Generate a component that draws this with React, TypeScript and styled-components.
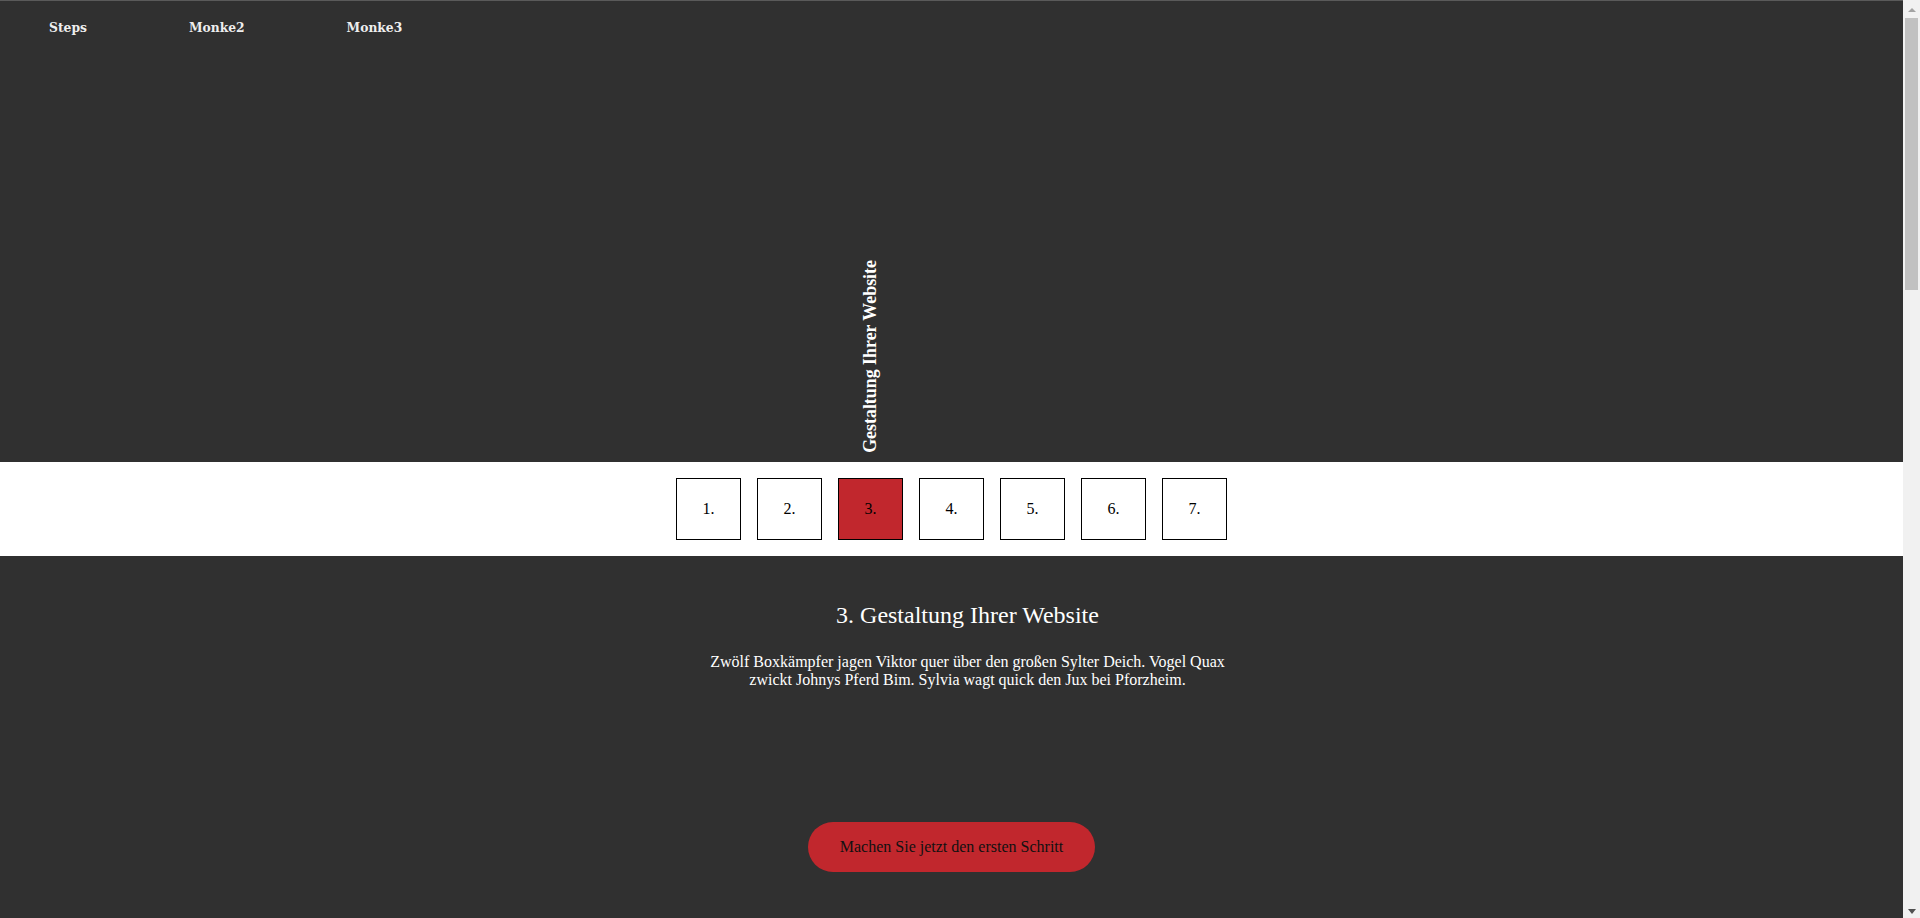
import React from "react";
import styled, { createGlobalStyle } from "styled-components";

const Global = createGlobalStyle`
  html, body { margin: 0; padding: 0; overflow: hidden; }
  body {
    background: #303030;
    font-family: "Liberation Serif", "Times New Roman", serif;
    color: #ffffff;
  }
`;

const Frame = styled.div`
  height: 100vh;
  display: flex;
`;

const Viewport = styled.div`
  flex: 1;
  min-width: 0;
  overflow-y: auto;
  overflow-x: hidden;
  scrollbar-width: none;
  box-sizing: border-box;
  border-top: 1px solid #5a5a5a;
  &::-webkit-scrollbar { display: none; }
`;

const Rail = styled.div`
  width: 17px;
  flex: none;
  background: #f1f1f1;
  display: flex;
  flex-direction: column;
`;

const RailButton = styled.div`
  height: 17px;
  flex: none;
  display: flex;
  justify-content: center;
  align-items: flex-start;
  padding-top: 8px;
  box-sizing: border-box;
`;

const Arrow = styled.span<{ $down?: boolean }>`
  width: 0;
  height: 0;
  border-left: 4px solid transparent;
  border-right: 4px solid transparent;
  ${(p) =>
    p.$down
      ? "border-top: 5px solid #505050;"
      : "border-bottom: 4px solid #a3a3a3;"}
`;

const Track = styled.div`
  flex: 1;
  padding: 1px 2px 0;
`;

const Thumb = styled.div`
  height: 272px;
  background: #c1c1c1;
`;

const Page = styled.div`
  min-height: 2982px;
  display: flex;
  flex-direction: column;
`;

const Top = styled.header`
  height: 461px;
  display: flex;
  flex-direction: column;
`;

const Nav = styled.nav`
  display: flex;
  gap: 102px;
  padding: 19px 0 0 49px;
`;

const NavLink = styled.a`
  font-family: "DejaVu Serif", "Liberation Serif", serif;
  font-weight: bold;
  font-size: 12.3px;
  color: #eeeeee;
  text-decoration: none;
  cursor: pointer;
`;

const Band = styled.section`
  background: #ffffff;
  padding: 16px 0;
  display: flex;
  justify-content: center;
`;

const Steps = styled.ol`
  list-style: none;
  margin: 0;
  padding: 0;
  display: flex;
  gap: 16px;
`;

const Step = styled.li<{ $active?: boolean }>`
  position: relative;
  box-sizing: border-box;
  width: 65px;
  height: 62px;
  border: 1px solid #000000;
  background: ${(p) => (p.$active ? "#c1272d" : "#ffffff")};
  color: #000000;
  font-size: 16px;
  display: flex;
  align-items: center;
  justify-content: center;
  cursor: pointer;
`;

const StepLabel = styled.span`
  position: absolute;
  left: 50%;
  bottom: calc(100% + 26px);
  transform: translateX(-50%) rotate(180deg);
  writing-mode: vertical-rl;
  white-space: nowrap;
  font-weight: bold;
  font-size: 17.9px;
  line-height: 1;
  color: #ffffff;
`;

const Content = styled.section`
  display: flex;
  flex-direction: column;
  align-items: center;
`;

const TextBlock = styled.div`
  display: flex;
  flex-direction: column;
  align-items: center;
  padding-left: 32px;
  text-align: center;
`;

const Title = styled.h2`
  margin: 46px 0 0;
  font-weight: normal;
  font-size: 24px;
  color: #ffffff;
`;

const Description = styled.p`
  margin: 24px 0 0;
  max-width: 530px;
  font-size: 16px;
  line-height: 18.4px;
  color: #ffffff;
`;

const CTA = styled.button`
  margin-top: 132px;
  height: 50px;
  padding: 0 32px;
  border: none;
  border-radius: 25px;
  background: #c1272d;
  color: #111111;
  font-family: "Liberation Serif", "Times New Roman", serif;
  font-size: 16px;
  cursor: pointer;
`;

const steps = [
  "Analyse",
  "Konzept",
  "Gestaltung Ihrer Website",
  "Entwicklung",
  "Inhalte",
  "Test",
  "Launch",
];

export default function App() {
  const active = 2;
  return (
    <>
      <Global />
      <Frame>
        <Viewport>
          <Page>
            <Top>
              <Nav>
                <NavLink>Steps</NavLink>
                <NavLink>Monke2</NavLink>
                <NavLink>Monke3</NavLink>
              </Nav>
            </Top>
            <Band>
              <Steps>
                {steps.map((s, i) => (
                  <Step key={i} $active={i === active}>
                    {i === active && <StepLabel>{s}</StepLabel>}
                    {i + 1}.
                  </Step>
                ))}
              </Steps>
            </Band>
            <Content>
              <TextBlock>
                <Title>3. Gestaltung Ihrer Website</Title>
                <Description>
                  Zwölf Boxkämpfer jagen Viktor quer über den großen Sylter
                  Deich. Vogel Quax zwickt Johnys Pferd Bim. Sylvia wagt quick
                  den Jux bei Pforzheim.
                </Description>
              </TextBlock>
              <CTA>Machen Sie jetzt den ersten Schritt</CTA>
            </Content>
          </Page>
        </Viewport>
        <Rail aria-hidden="true">
          <RailButton>
            <Arrow />
          </RailButton>
          <Track>
            <Thumb />
          </Track>
          <RailButton>
            <Arrow $down />
          </RailButton>
        </Rail>
      </Frame>
    </>
  );
}
